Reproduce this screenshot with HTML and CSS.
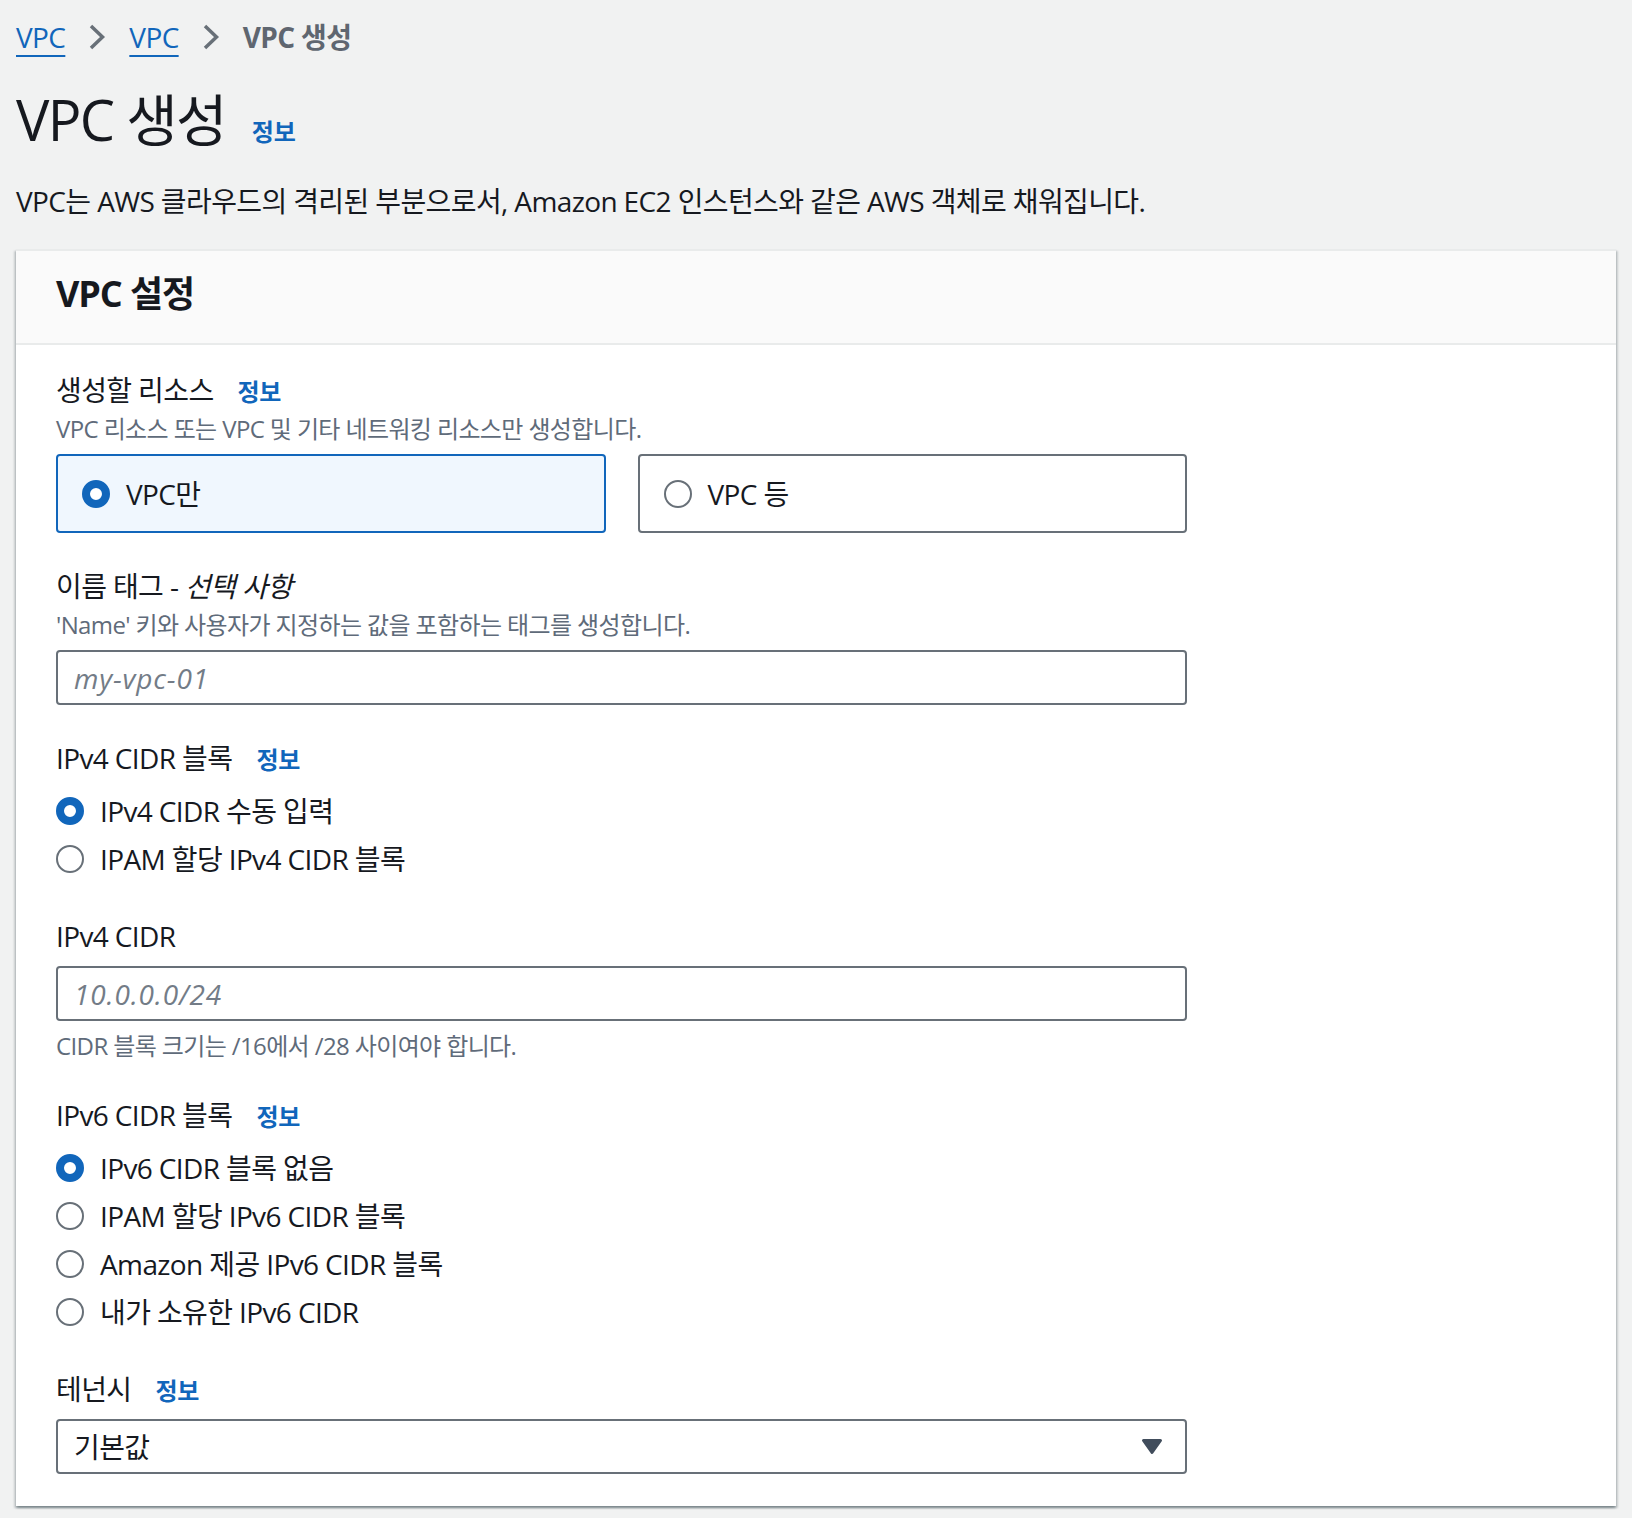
FILE: index.html
```html
<!DOCTYPE html>
<html lang="ko">
<head>
<meta charset="utf-8">
<title>VPC 생성</title>
<link rel="stylesheet" href="styles.css">
</head>
<body>
<nav class="breadcrumbs">
  <a href="#">VPC</a>
  <svg class="chevron" viewBox="0 0 18 28" aria-hidden="true"><path d="M3 3 L14.5 14 L3 25" fill="none" stroke="#687078" stroke-width="3.5"/></svg>
  <a href="#">VPC</a>
  <svg class="chevron" viewBox="0 0 18 28" aria-hidden="true"><path d="M3 3 L14.5 14 L3 25" fill="none" stroke="#687078" stroke-width="3.5"/></svg>
  <span class="crumb-current">VPC 생성</span>
</nav>

<header class="page-header">
  <h1 class="page-title">VPC 생성</h1>
  <a class="info-link" href="#">정보</a>
</header>
<p class="page-desc">VPC는 AWS 클라우드의 격리된 부분으로서, Amazon EC2 인스턴스와 같은 AWS 객체로 채워집니다.</p>

<section class="container">
  <div class="container-header">
    <h2>VPC 설정</h2>
  </div>
  <div class="container-body">
    <div class="field">
      <div class="field-label"><span>생성할 리소스</span><a class="info-link" href="#">정보</a></div>
      <div class="field-desc">VPC 리소스 또는 VPC 및 기타 네트워킹 리소스만 생성합니다.</div>
      <div class="tiles">
        <div class="tile selected"><span class="radio checked"></span><span>VPC만</span></div>
        <div class="tile"><span class="radio"></span><span>VPC 등</span></div>
      </div>
    </div>

    <div class="field">
      <div class="field-label"><span>이름 태그 - <em>선택 사항</em></span></div>
      <div class="field-desc">'Name' 키와 사용자가 지정하는 값을 포함하는 태그를 생성합니다.</div>
      <input class="text-input" type="text" placeholder="my-vpc-01">
    </div>

    <div class="field">
      <div class="field-label"><span>IPv4 CIDR 블록</span><a class="info-link" href="#">정보</a></div>
      <div class="radio-group">
        <div class="radio-row"><span class="radio checked"></span><span>IPv4 CIDR 수동 입력</span></div>
        <div class="radio-row"><span class="radio"></span><span>IPAM 할당 IPv4 CIDR 블록</span></div>
      </div>
    </div>

    <div class="field">
      <div class="field-label"><span>IPv4 CIDR</span></div>
      <input class="text-input" type="text" placeholder="10.0.0.0/24">
      <div class="constraint">CIDR 블록 크기는 /16에서 /28 사이여야 합니다.</div>
    </div>

    <div class="field">
      <div class="field-label"><span>IPv6 CIDR 블록</span><a class="info-link" href="#">정보</a></div>
      <div class="radio-group">
        <div class="radio-row"><span class="radio checked"></span><span>IPv6 CIDR 블록 없음</span></div>
        <div class="radio-row"><span class="radio"></span><span>IPAM 할당 IPv6 CIDR 블록</span></div>
        <div class="radio-row"><span class="radio"></span><span>Amazon 제공 IPv6 CIDR 블록</span></div>
        <div class="radio-row"><span class="radio"></span><span>내가 소유한 IPv6 CIDR</span></div>
      </div>
    </div>

    <div class="field">
      <div class="field-label"><span>테넌시</span><a class="info-link" href="#">정보</a></div>
      <div class="select">
        <span>기본값</span>
        <svg class="caret" viewBox="0 0 22 17" aria-hidden="true"><path d="M2.5 2.5 H19.5 L11 14.5 Z" fill="#414d5c" stroke="#414d5c" stroke-width="3" stroke-linejoin="round"/></svg>
      </div>
    </div>
  </div>
</section>
</body>
</html>
```

FILE: styles.css
```css
* {
  box-sizing: border-box;
}

body {
  margin: 0;
  padding: 17px 16px 12px;
  background: #f1f2f2;
  font-family: "Open Sans", "Noto Sans CJK KR", sans-serif;
  font-size: 28px;
  font-weight: 400;
  line-height: 40px;
  letter-spacing: -0.022em;
  color: #16191f;
}

a {
  color: #1166bb;
}

.breadcrumbs {
  display: flex;
  align-items: center;
  gap: 23px;
  height: 40px;
}

.breadcrumbs a {
  text-decoration: underline;
  text-decoration-thickness: 2px;
  text-underline-offset: 7px;
}

.chevron {
  display: block;
  width: 18px;
  height: 28px;
}

.crumb-current {
  color: #5f6670;
  font-weight: 700;
}

.page-header {
  display: flex;
  align-items: baseline;
  gap: 26px;
  margin-top: 30px;
}

.page-title {
  margin: 0;
  font-size: 56px;
  line-height: 64px;
  font-weight: 400;
  letter-spacing: -0.03em;
}

.info-link {
  font-size: 24px;
  line-height: 32px;
  font-weight: 700;
  text-decoration: none;
  letter-spacing: -0.01em;
}

.page-desc {
  margin: 30px 0 0;
}

.container {
  margin-top: 28px;
  background: #fff;
  border-top: 2px solid #e9ebeb;
  box-shadow: 0 2px 2px rgba(0, 28, 36, 0.3), 2px 2px 2px rgba(0, 28, 36, 0.15), -2px 2px 2px rgba(0, 28, 36, 0.15);
}

.container-header {
  background: #fafafa;
  padding: 21px 40px 27px;
  border-bottom: 2px solid #e9ebeb;
}

.container-header h2 {
  margin: 0;
  font-size: 36px;
  line-height: 44px;
  font-weight: 700;
  letter-spacing: -0.03em;
}

.container-body {
  display: flex;
  flex-direction: column;
  gap: 33px;
  padding: 25px 40px 32px;
}

.field {
  max-width: 1131px;
}

.field-label {
  display: flex;
  align-items: baseline;
  gap: 24px;
}

.field-label em {
  font-style: italic;
}

.field-desc {
  margin-top: 3px;
  font-size: 24px;
  line-height: 32px;
  color: #5f6b7a;
}

.tiles {
  display: grid;
  grid-template-columns: 1fr 1fr;
  gap: 32px;
  margin-top: 9px;
}

.tile {
  display: flex;
  align-items: center;
  gap: 16px;
  height: 79px;
  padding: 0 24px;
  border: 2px solid #687078;
  border-radius: 4px;
  background: #fff;
}

.tile.selected {
  border-color: #1166bb;
  background: #f0f7fe;
}

.radio {
  flex: none;
  width: 28px;
  height: 28px;
  border-radius: 50%;
  border: 2.5px solid #687078;
  background: #fff;
}

.radio.checked {
  border: 8px solid #1166bb;
}

.radio-group {
  margin-top: 9px;
}

.radio-row {
  display: flex;
  align-items: center;
  gap: 16px;
  height: 48px;
}

.text-input {
  display: block;
  width: 100%;
  height: 55px;
  margin-top: 10px;
  padding: 0 16px;
  border: 2px solid #687078;
  border-radius: 4px;
  background: #fff;
  font: inherit;
  letter-spacing: 0.03em;
  color: #16191f;
  outline: none;
}

.field-desc + .text-input {
  margin-top: 9px;
}

.text-input::placeholder {
  font-style: italic;
  color: #737c87;
}

.constraint {
  margin-top: 9px;
  font-size: 24px;
  line-height: 32px;
  color: #5f6b7a;
}

.select {
  display: flex;
  align-items: center;
  justify-content: space-between;
  height: 55px;
  margin-top: 10px;
  padding: 0 22px 0 16px;
  border: 2px solid #687078;
  border-radius: 4px;
  background: #fff;
}

.caret {
  display: block;
  width: 22px;
  height: 17px;
}
```
